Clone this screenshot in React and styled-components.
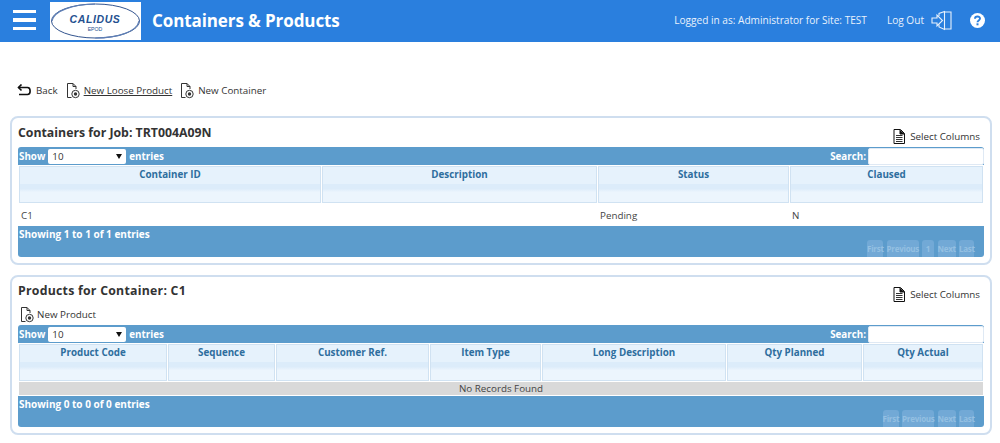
import React from "react";
import styled, { createGlobalStyle } from "styled-components";

const GlobalStyle = createGlobalStyle`
  html, body { margin: 0; padding: 0; background: #fff; }
  body { font-family: "Open Sans", "Liberation Sans", sans-serif; color: #333; overflow: hidden; }
`;

const Page = styled.div`
  width: 1000px;
  height: 443px;
  overflow: hidden;
`;

/* ---------- top bar ---------- */
const TopBar = styled.header`
  box-sizing: border-box;
  height: 42px;
  padding-bottom: 2px;
  background: #2a7fde;
  display: flex;
  align-items: center;
  color: #fff;
`;

const Burger = styled.div`
  width: 23px;
  margin-left: 13px;
  display: flex;
  flex-direction: column;
  gap: 5px;
  span { display: block; height: 3.5px; background: #fff; }
`;

const LogoBox = styled.div`
  width: 91px;
  height: 38px;
  margin: 1px 0 0 14px;
  background: #fff;
  flex: none;
`;

const PageTitle = styled.h1`
  margin: 0 0 0 11px;
  font-size: 17px;
  font-weight: 700;
  letter-spacing: -0.1px;
`;

const UserInfo = styled.div`
  margin-left: auto;
  font-size: 10.1px;
  color: #e8f1fc;
`;

const LogOut = styled.div`
  margin-left: 20px;
  font-size: 10.1px;
  color: #e8f1fc;
  display: flex;
  align-items: center;
  gap: 7px;
`;

const HelpIcon = styled.svg`
  margin: 0 15px 0 18px;
`;

/* ---------- action links ---------- */
const Actions = styled.nav`
  height: 22px;
  margin: 37px 0 15px 17px;
  display: flex;
  align-items: center;
  font-size: 9.8px;
  color: #333;
`;

const Action = styled.span`
  display: flex;
  align-items: center;
  gap: 4px;
  margin-right: 8px;
  span { text-decoration: ${(p) => (p.$underline ? "underline" : "none")}; }
`;

/* ---------- panels ---------- */
const Panel = styled.section`
  box-sizing: border-box;
  width: 982px;
  height: ${(p) => p.$height}px;
  margin: 0 0 ${(p) => p.$bottom || 0}px 10px;
  padding: 0 6px;
  border: 2px solid #cfdeef;
  border-radius: 8px;
  display: flex;
  flex-direction: column;
`;

const PanelHead = styled.div`
  height: 29px;
  flex: none;
  display: flex;
  justify-content: space-between;
`;

const PanelTitle = styled.h2`
  margin: ${(p) => p.$top}px 0 0;
  font-size: 12.3px;
  line-height: 16px;
  font-weight: 700;
  letter-spacing: ${(p) => p.$spacing || 0}px;
  color: #333;
`;

const SelectColumns = styled.div`
  margin: ${(p) => p.$top}px 4px 0 0;
  height: 16px;
  display: flex;
  align-items: center;
  gap: 5px;
  font-size: 9.8px;
  color: #333;
`;

const NewProduct = styled.div`
  height: 17px;
  margin: 0 0 2px 2px;
  display: flex;
  align-items: center;
  gap: 3px;
  font-size: 9.8px;
  color: #333;
`;

/* ---------- data table ---------- */
const TableBar = styled.div`
  height: 18px;
  flex: none;
  background: #5c9ccc;
  border-radius: 3px 3px 0 0;
  display: flex;
  align-items: center;
  padding: 0 0 0 1px;
  color: #fff;
  font-size: 9.8px;
  font-weight: 700;
`;

const FakeSelect = styled.div`
  box-sizing: border-box;
  width: 78px;
  height: 15px;
  margin: 0 3px;
  padding: 0 4px;
  background: #fff;
  border-radius: 2px;
  color: #333;
  font-weight: 400;
  display: flex;
  align-items: center;
  justify-content: space-between;
  &::after {
    content: "";
    border-left: 3px solid transparent;
    border-right: 3px solid transparent;
    border-top: 5px solid #111;
  }
`;

const SearchLabel = styled.span`
  margin-left: auto;
  margin-right: 2px;
`;

const SearchInput = styled.div`
  box-sizing: border-box;
  width: 116px;
  height: 17px;
  background: #fff;
  border: 1px solid #dfe9f4;
  border-radius: 2px;
`;

const HeaderRow = styled.div`
  flex: none;
  display: grid;
  grid-template-columns: ${(p) => p.$cols};
  gap: 1px;
  height: 39px;
  padding: 1px 1px 1px;
  box-sizing: border-box;
`;

const HeaderCell = styled.div`
  border: 1px solid #d0e2f2;
  background: linear-gradient(#e6f2fc 0 50%, #dcecfa 50% 62%, #ecf5fd 72% 100%);
  color: #2e6e9e;
  font-size: 9.8px;
  font-weight: 700;
  text-align: center;
  line-height: 16px;
`;

const DataRow = styled.div`
  flex: none;
  height: 22px;
  display: grid;
  grid-template-columns: ${(p) => p.$cols};
  gap: 1px;
  padding: 0 1px;
  align-items: center;
  font-size: 9.8px;
  color: #444;
  span { padding-left: 2px; }
`;

const EmptyRow = styled.div`
  flex: none;
  height: 13px;
  margin: 0 1px 1px;
  background: #d9d9d9;
  font-size: 9.8px;
  line-height: 13px;
  text-align: center;
  color: #444;
`;

const TableFoot = styled.div`
  flex: none;
  height: 31px;
  background: #5c9ccc;
  border-radius: 0 0 3px 3px;
  padding: 2px 10px 0 1px;
  box-sizing: border-box;
  color: #fff;
  font-size: 10px;
  font-weight: 700;
  line-height: 12px;
  display: flex;
  flex-direction: column;
  justify-content: space-between;
`;

const Pager = styled.div`
  align-self: flex-end;
  display: flex;
  gap: 3.5px;
`;

const PageBtn = styled.span`
  width: ${(p) => p.$w}px;
  height: 17px;
  border-radius: 3px 3px 0 0;
  background: #72a9d6;
  color: #94c0e2;
  font-size: 8px;
  line-height: 17px;
  font-weight: 700;
  letter-spacing: -0.25px;
  text-align: center;
`;

/* ---------- drawings ---------- */
const HamburgerIcon = () => (
  <Burger>
    <span />
    <span />
    <span />
  </Burger>
);

const CalidusLogo = () => (
  <LogoBox>
    <svg width="91" height="38" viewBox="0 0 91 38">
      <ellipse cx="45.5" cy="19" ry="17" rx="44" fill="none" stroke="#34558f" strokeWidth="1" />
      <path d="M2 19C4 8 24 2.5 45 2M89 19C87 30 67 36 45 36" fill="none" stroke="#5f7fb5" strokeWidth="1.2" />
      <text x="45" y="21" textAnchor="middle" fontFamily="Liberation Sans, sans-serif" fontSize="10.5" fontWeight="700" fontStyle="italic" letterSpacing="0.6" fill="#24508f">
        CALIDUS
      </text>
      <text x="45" y="28.5" textAnchor="middle" fontFamily="Liberation Sans, sans-serif" fontSize="5.2" fill="#24508f">
        EPOD
      </text>
    </svg>
  </LogoBox>
);

const ExitIcon = () => (
  <svg width="21" height="21" viewBox="0 0 21 21" fill="none" stroke="#e8f1fc" strokeWidth="1.1">
    <path d="M8 6V3.5L13.5 1.5V19.5L8 17V14.5" />
    <path d="M13.5 2H20V19H13.5" />
    <path d="M1 8H6V5L11.5 10.5L6 16V13H1Z" />
  </svg>
);

const NewDocIcon = () => (
  <svg width="14" height="17" viewBox="0 0 14 17" fill="none" stroke="#333" strokeWidth="1">
    <path d="M5.5 15.5H1.5V1.5H7L10 4.5V7" />
    <path d="M7 1.5V4.5H10" />
    <circle cx="9.5" cy="12" r="3.7" />
    <circle cx="9.5" cy="12" r="1.7" fill="#333" stroke="none" />
  </svg>
);

const BackIcon = () => (
  <svg width="15" height="12" viewBox="0 0 15 12" fill="none" stroke="#111" strokeWidth="1.6">
    <path d="M1.5 3.5H10.5C14 3.5 14 10.5 10.5 10.5H2" />
    <path d="M4.5 0.5L1.5 3.5L4.5 6.5" />
  </svg>
);

const ColumnsIcon = () => (
  <svg width="12" height="15" viewBox="0 0 12 15">
    <path d="M1 .5H7.5L11.5 4.5V14.5H1Z" fill="#fff" stroke="#111" />
    <path d="M7 1V5H11.5" fill="#111" stroke="#111" />
    <path d="M3 6.5H9.5M3 8.5H9.5M3 10.5H9.5M3 12.5H9.5" stroke="#333" />
  </svg>
);

/* ---------- table block ---------- */
const TableTop = () => (
  <TableBar>
    Show
    <FakeSelect>10</FakeSelect>
    entries
    <SearchLabel>Search:</SearchLabel>
    <SearchInput />
  </TableBar>
);

const containerCols = "302px 275px 191px 1fr";
const productCols = "148px 107px 153px 111px 184px 135px 1fr";

export default function App() {
  return (
    <Page>
      <GlobalStyle />
      <TopBar>
        <HamburgerIcon />
        <CalidusLogo />
        <PageTitle>Containers &amp; Products</PageTitle>
        <UserInfo>Logged in as: Administrator for Site: TEST</UserInfo>
        <LogOut>
          Log Out
          <ExitIcon />
        </LogOut>
        <HelpIcon width="15" height="15" viewBox="0 0 15 15">
          <circle cx="7.5" cy="7.5" r="7.5" fill="#fff" />
          <path d="M5 5.8C5 2.8 10 2.8 10 5.6C10 7.4 7.5 7.4 7.5 9.2" fill="none" stroke="#2a7fde" strokeWidth="1.9" />
          <rect x="6.5" y="10.3" width="2" height="2" fill="#2a7fde" />
        </HelpIcon>
      </TopBar>

      <Actions>
        <Action>
          <BackIcon />
          <span>Back</span>
        </Action>
        <Action $underline>
          <NewDocIcon />
          <span>New Loose Product</span>
        </Action>
        <Action>
          <NewDocIcon />
          <span>New Container</span>
        </Action>
      </Actions>

      <Panel $height={149} $bottom={10}>
        <PanelHead>
          <PanelTitle $top={7}>Containers for Job: TRT004A09N</PanelTitle>
          <SelectColumns $top={10}>
            <ColumnsIcon />
            Select Columns
          </SelectColumns>
        </PanelHead>
        <TableTop />
        <HeaderRow $cols={containerCols}>
          <HeaderCell>Container ID</HeaderCell>
          <HeaderCell>Description</HeaderCell>
          <HeaderCell>Status</HeaderCell>
          <HeaderCell>Claused</HeaderCell>
        </HeaderRow>
        <DataRow $cols={containerCols}>
          <span>C1</span>
          <span />
          <span>Pending</span>
          <span>N</span>
        </DataRow>
        <TableFoot>
          Showing 1 to 1 of 1 entries
          <Pager>
            <PageBtn $w={16}>First</PageBtn>
            <PageBtn $w={32}>Previous</PageBtn>
            <PageBtn $w={12}>1</PageBtn>
            <PageBtn $w={18}>Next</PageBtn>
            <PageBtn $w={15}>Last</PageBtn>
          </Pager>
        </TableFoot>
      </Panel>

      <Panel $height={160}>
        <PanelHead>
          <PanelTitle $top={6} $spacing={0.25}>Products for Container: C1</PanelTitle>
          <SelectColumns $top={9}>
            <ColumnsIcon />
            Select Columns
          </SelectColumns>
        </PanelHead>
        <NewProduct>
          <NewDocIcon />
          New Product
        </NewProduct>
        <TableTop />
        <HeaderRow $cols={productCols}>
          <HeaderCell>Product Code</HeaderCell>
          <HeaderCell>Sequence</HeaderCell>
          <HeaderCell>Customer Ref.</HeaderCell>
          <HeaderCell>Item Type</HeaderCell>
          <HeaderCell>Long Description</HeaderCell>
          <HeaderCell>Qty Planned</HeaderCell>
          <HeaderCell>Qty Actual</HeaderCell>
        </HeaderRow>
        <EmptyRow>No Records Found</EmptyRow>
        <TableFoot>
          Showing 0 to 0 of 0 entries
          <Pager>
            <PageBtn $w={16}>First</PageBtn>
            <PageBtn $w={32}>Previous</PageBtn>
            <PageBtn $w={18}>Next</PageBtn>
            <PageBtn $w={15}>Last</PageBtn>
          </Pager>
        </TableFoot>
      </Panel>
    </Page>
  );
}
